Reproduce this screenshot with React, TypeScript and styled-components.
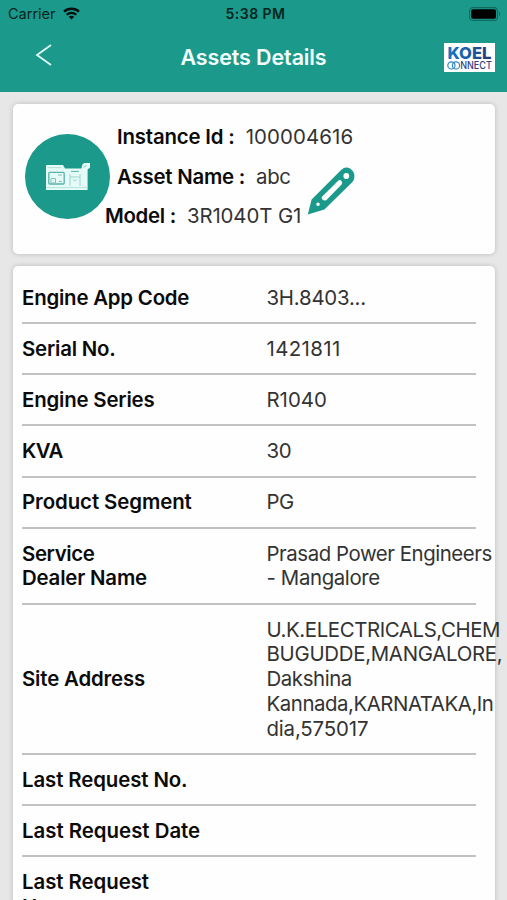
import React from "react";
import styled, { createGlobalStyle } from "styled-components";

const TEAL = "#1b998b";

const Global = createGlobalStyle`
  * { box-sizing: border-box; }
  html, body { margin: 0; padding: 0; overflow: hidden; }
  body { background: #e7e7e7; font-family: Inter, "Liberation Sans", sans-serif; color: #0b0b0b; }
`;

const Screen = styled.div`
  width: 507px;
  height: 900px;
  overflow: hidden;
  display: flex;
  flex-direction: column;
  background: #e7e7e7;
`;

const Header = styled.header`
  height: 92px;
  flex: none;
  background: ${TEAL};
`;

const StatusBar = styled.div`
  height: 27px;
  padding: 0 6px 0 8px;
  display: grid;
  grid-template-columns: 1fr auto 1fr;
  align-items: center;
  color: #052521;
`;

const Carrier = styled.div`
  display: flex;
  align-items: center;
  gap: 7px;
  font-size: 14.5px;
`;

const Clock = styled.div`
  font-size: 14px;
  font-weight: 600;
  letter-spacing: 0.45px;
  margin-left: 2px;
`;

const BatterySlot = styled.div`
  display: flex;
  justify-content: flex-end;
`;

const NavBar = styled.div`
  height: 60px;
  padding: 0 12px;
  display: grid;
  grid-template-columns: 1fr auto 1fr;
  align-items: center;
`;

const BackButton = styled.button`
  border: 0;
  padding: 0;
  width: 18px;
  height: 22px;
  background: none;
  display: flex;
  margin: -4px 0 0 23px;
`;

const Title = styled.h1`
  margin: 0;
  font-size: 21.5px;
  font-weight: 600;
  letter-spacing: -0.12px;
  color: #f2fffc;
`;

const Logo = styled.div`
  justify-self: end;
  width: 51px;
  height: 29px;
  background: #fff;
`;

const Card = styled.section`
  margin: 0 12px 0 13px;
  flex: none;
  background: #fefefe;
  border-radius: 5px;
  box-shadow: 0 0 5px rgba(0, 0, 0, 0.2);
`;

const SummaryCard = styled(Card)`
  margin-top: 12px;
  height: 150px;
  padding: 13px 0 0 12px;
  display: flex;
`;

const Avatar = styled.div`
  flex: none;
  width: 85px;
  height: 85px;
  margin-top: 17px;
  border-radius: 50%;
  background: ${TEAL};
  display: flex;
  align-items: center;
  justify-content: center;
`;

const Facts = styled.div`
  flex: none;
  width: 244px;
  display: flex;
  flex-direction: column;
`;

const Fact = styled.div<{ $indent: number }>`
  margin-left: ${(p) => p.$indent}px;
  display: flex;
  align-items: center;
  white-space: pre;
  font-size: 20.4px;
  height: 39.6px;
`;

const FactLabel = styled.span<{ $ls: number }>`
  font-weight: 600;
  letter-spacing: ${(p) => p.$ls}px;
`;

const FactValue = styled.span<{ $ls: number }>`
  margin-left: 11px;
  color: #333;
  letter-spacing: ${(p) => p.$ls}px;
`;

const EditButton = styled.button`
  flex: none;
  border: 0;
  padding: 0;
  background: none;
  width: 48px;
  height: 48px;
  margin: 50px 0 0 -47px;
`;

const DetailCard = styled(Card)`
  margin-top: 12px;
  padding: 6.8px 0 0 9px;
  height: 700px;
`;

const Row = styled.div`
  width: 454px;
  display: grid;
  grid-template-columns: 244.5px 240px;
  align-items: center;
  padding: 12.8px 0 11.6px;
  border-bottom: 2px solid #c2c2c2;
  font-size: 20.4px;
  line-height: 24.8px;
  white-space: pre;
`;

const Line = styled.div<{ $ls: number }>`
  letter-spacing: ${(p) => p.$ls}px;
`;

const Label = styled.div`
  font-weight: 600;
`;

const Value = styled.div`
  color: #333;
`;

type Text = [string, number];

const rows: { label: Text[]; value: Text[] }[] = [
  { label: [["Engine App Code", -0.2]], value: [["3H.8403...", -0.22]] },
  { label: [["Serial No.", -0.2]], value: [["1421811", 0.4]] },
  { label: [["Engine Series", -0.18]], value: [["R1040", 0]] },
  { label: [["KVA", -0.6]], value: [["30", -0.4]] },
  { label: [["Product Segment", -0.07]], value: [["PG", -0.5]] },
  {
    label: [["Service", -0.35], ["Dealer Name", -0.18]],
    value: [["Prasad Power Engineers", -0.44], ["- Mangalore", -0.38]],
  },
  {
    label: [["Site Address", -0.15]],
    value: [
      ["U.K.ELECTRICALS,CHEM", -0.4],
      ["BUGUDDE,MANGALORE,", -0.28],
      ["Dakshina", -0.4],
      ["Kannada,KARNATAKA,In", -0.44],
      ["dia,575017", -0.15],
    ],
  },
  { label: [["Last Request No.", -0.1]], value: [] },
  { label: [["Last Request Date", 0]], value: [] },
  { label: [["Last Request", -0.05], ["Hours", 0]], value: [] },
];

const Lines = ({ items }: { items: Text[] }) => (
  <>
    {items.map(([text, ls]) => (
      <Line key={text} $ls={ls}>{text}</Line>
    ))}
  </>
);

const WifiIcon = () => (
  <svg width="17" height="13" viewBox="0 0 17 13" fill="none" stroke="#04100e">
    <path d="M1 4.6C5 .8 12 .8 16 4.6" strokeWidth="2.4" />
    <path d="M3.7 7.7C6.4 5.2 10.6 5.2 13.3 7.7" strokeWidth="2.2" />
    <path d="M8.5 12.6L5.7 9.8C7.4 8.4 9.6 8.4 11.3 9.8Z" fill="#04100e" stroke="none" />
  </svg>
);

const BatteryIcon = () => (
  <svg width="32" height="14" viewBox="0 0 32 14">
    <rect x="0.6" y="0.6" width="27.8" height="12.8" rx="3.4" fill="none" stroke="#106a60" strokeWidth="1.1" />
    <rect x="2.2" y="2.2" width="24.8" height="9.6" rx="1.8" fill="#000" />
    <path d="M30 4.6c1.6.8 1.6 4 0 4.8z" fill="#106a60" />
  </svg>
);

const KoelLogo = () => (
  <svg width="51" height="29" viewBox="0 0 51 29" overflow="visible">
    <defs>
      <linearGradient id="koel" x1="0" x2="1">
        <stop offset="0" stopColor="#1277c4" />
        <stop offset="0.5" stopColor="#1d5ca5" />
        <stop offset="1" stopColor="#27346f" />
      </linearGradient>
    </defs>
    <text x="3.5" y="16" fontFamily="Inter" fontWeight="800" fontSize="16.5" textLength="44" lengthAdjust="spacingAndGlyphs" fill="url(#koel)">KOEL</text>
    <g fill="none" stroke="#2f86c6" strokeWidth="1.2">
      <circle cx="7.4" cy="22.4" r="3.6" />
      <circle cx="12" cy="22.4" r="3.6" />
    </g>
    <text x="16.2" y="26.3" fontFamily="Inter" fontWeight="500" fontSize="10.8" textLength="31.6" lengthAdjust="spacingAndGlyphs" fill="#35407d">NNECT</text>
  </svg>
);

const GeneratorIcon = () => (
  <svg width="46" height="30" viewBox="0 0 46 30">
    <path d="M1 4Q1 3 2 3H18L20 6.6H36.4L37.4 2.4L39 1H45V5.6L42.6 7.6V28H1Z" fill="#e6fbf8" />
    <path d="M3 5.6h13M1 25.6h41" stroke="#b4e2db" fill="none" />
    <rect x="3.8" y="10.4" width="15.4" height="11.6" rx="1" fill="none" stroke="#57b3a8" strokeWidth="1.3" />
    <path d="M6 16.5h4.5v4.5H6zM13 13h4M14 19.5h3" stroke="#7cc6bc" fill="none" />
    <path d="M26 9.4h8" stroke="#57b3a8" />
    <path d="M25 12v12M35 12v12M25 15h10M28 17.4l2 1.6 2-1.6" stroke="#9ad6cd" fill="none" />
    <path d="M38.6 5.4l3-2" stroke="#7cc6bc" />
  </svg>
);

const PencilIcon = () => (
  <svg width="48" height="48" viewBox="0 0 48 48">
    <path
      fillRule="evenodd"
      fill={TEAL}
      d="M0.8 47.4L4.6 32.4L34.6 2.4Q37.2 0.2 40.2 0.6Q43.4 1 45.8 4Q48 7 47.4 10.4Q47 13.4 45.4 15L17.4 42.6ZM15 29.7L31.7 13.3Q33.4 12.6 34.8 14.6Q35.8 16.4 34.6 17.6L19.2 33.2Q17 34 15.4 32.4Q14 31 15 29.7ZM36.4 9a2.9 2.9 0 1 0 5.8 0a2.9 2.9 0 1 0 -5.8 0ZM9.2 37.3a1.8 1.8 0 1 0 3.6 0a1.8 1.8 0 1 0 -3.6 0Z"
    />
  </svg>
);

export default function App() {
  return (
    <Screen>
      <Global />
      <Header>
        <StatusBar>
          <Carrier>Carrier <WifiIcon /></Carrier>
          <Clock>5:38 PM</Clock>
          <BatterySlot><BatteryIcon /></BatterySlot>
        </StatusBar>
        <NavBar>
          <BackButton aria-label="Back">
            <svg width="18" height="22" viewBox="0 0 18 22">
              <path d="M16 1L2 11L16 21" fill="none" stroke="#e4faf6" strokeWidth="1.8" />
            </svg>
          </BackButton>
          <Title>Assets Details</Title>
          <Logo><KoelLogo /></Logo>
        </NavBar>
      </Header>
      <SummaryCard>
        <Avatar><GeneratorIcon /></Avatar>
        <Facts>
          <Fact $indent={7}>
            <FactLabel $ls={-0.17}>Instance Id :</FactLabel>
            <FactValue $ls={0.12}>100004616</FactValue>
          </Fact>
          <Fact $indent={7}>
            <FactLabel $ls={-0.22}>Asset Name :</FactLabel>
            <FactValue $ls={-0.35}>abc</FactValue>
          </Fact>
          <Fact $indent={-5}>
            <FactLabel $ls={-0.3}>Model :</FactLabel>
            <FactValue $ls={-0.1}>3R1040T G1</FactValue>
          </Fact>
        </Facts>
        <EditButton aria-label="Edit"><PencilIcon /></EditButton>
      </SummaryCard>
      <DetailCard>
        {rows.map((r) => (
          <Row key={r.label.map((l) => l[0]).join(" ")}>
            <Label><Lines items={r.label} /></Label>
            <Value><Lines items={r.value} /></Value>
          </Row>
        ))}
      </DetailCard>
    </Screen>
  );
}
